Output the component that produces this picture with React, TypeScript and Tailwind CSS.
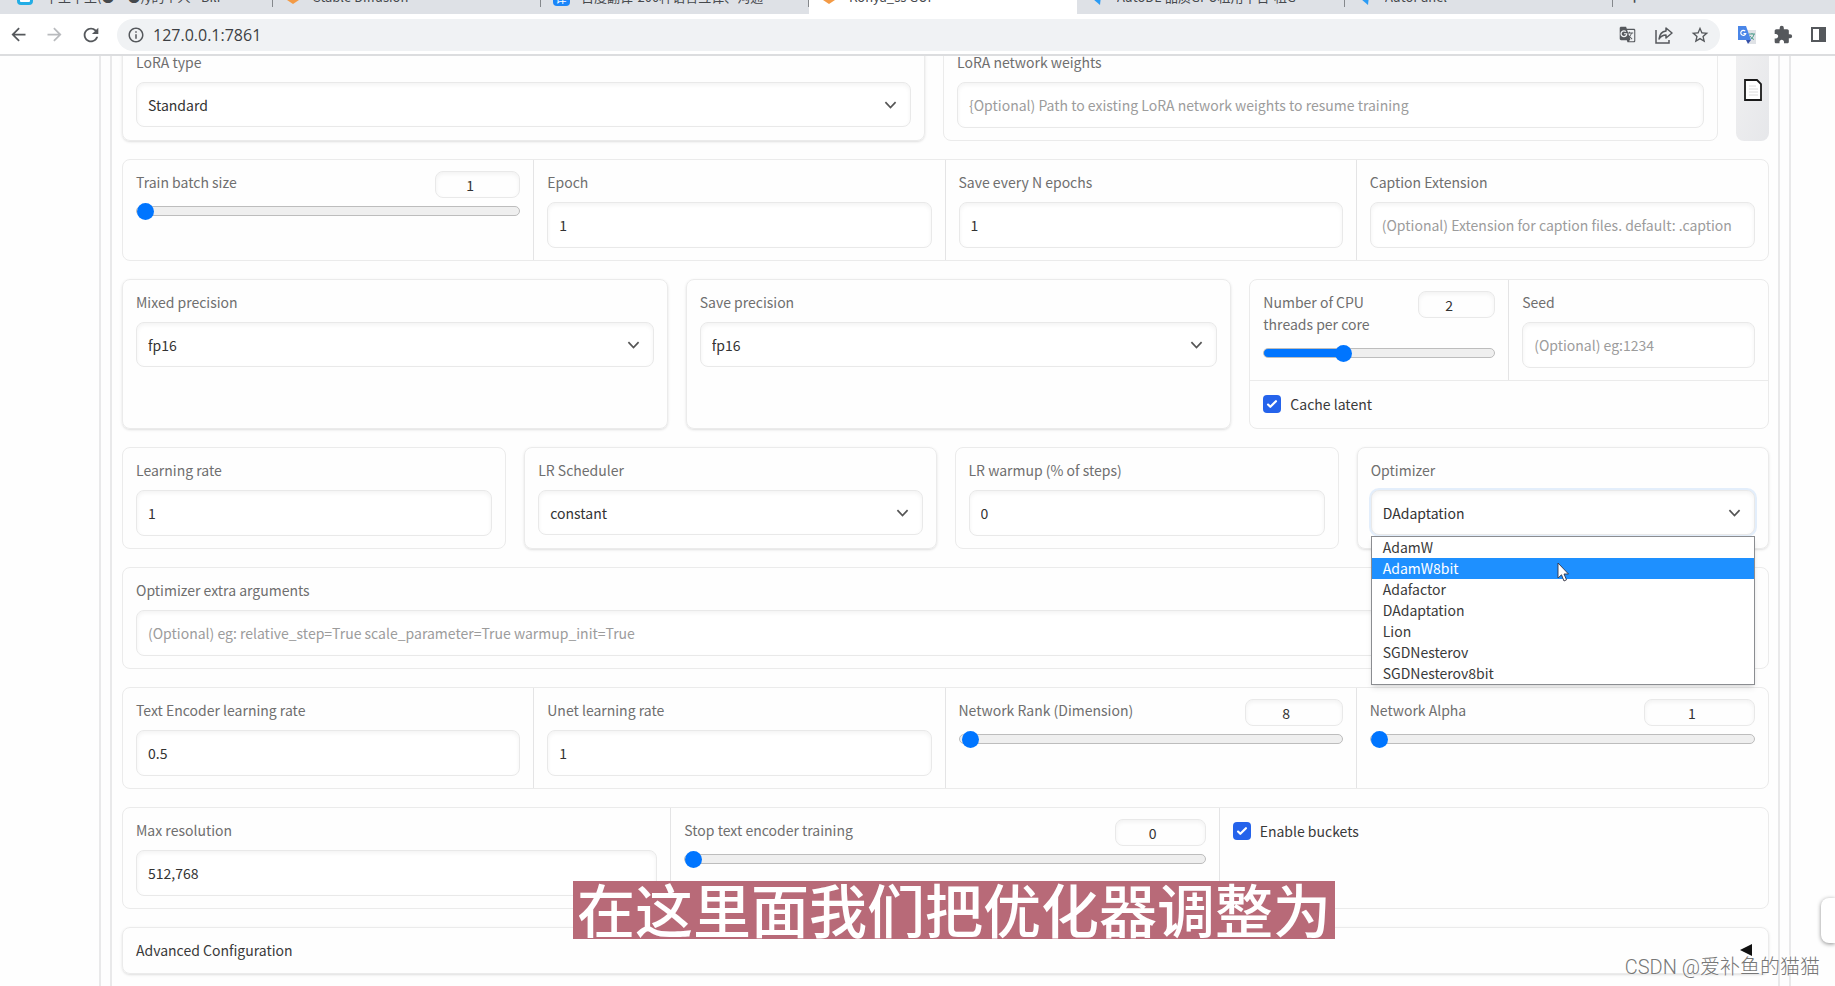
import { useId } from "react";
import type { ReactNode } from "react";
import clsx from "clsx";
import {
  MdArrowBack,
  MdArrowForward,
  MdExtension,
  MdGTranslate,
  MdInfoOutline,
  MdRefresh,
  MdStarBorder,
} from "react-icons/md";

const OPTIMIZERS = ["AdamW", "AdamW8bit", "Adafactor", "DAdaptation", "Lion", "SGDNesterov", "SGDNesterov8bit"];

const labelClass = "mb-[9px] block text-[14px] leading-[22px] text-[#6f6f6f]";
const fieldClass =
  "w-full rounded-lg border border-[#e9e9e9] bg-white px-[11px] text-[14px] text-[#333] shadow-[inset_0_2px_4px_0_rgba(0,0,0,0.05)] outline-none placeholder:text-[#9c9c9c]";
const cardClass = "min-w-0 rounded-lg border border-[#ebebeb]";
const cellClass = "min-w-0 px-[13px] pt-[11px] pb-3";

const TextField = ({ label, value, placeholder }: { label: string; value?: string; placeholder?: string }) => {
  const id = useId();
  return (
    <div className={cellClass}>
      <label htmlFor={id} className={labelClass}>
        {label}
      </label>
      <input id={id} type="text" defaultValue={value} placeholder={placeholder} className={clsx(fieldClass, "h-[46px]")} />
    </div>
  );
};

type SelectFieldProps = { label: string; value: string; options?: string[]; open?: boolean; children?: ReactNode };

const SelectField = ({ label, value, options = [value], open, children }: SelectFieldProps) => {
  const id = useId();
  return (
    <div className={cellClass}>
      <label htmlFor={id} className={labelClass}>
        {label}
      </label>
      <div className="relative mb-px">
        <select
          id={id}
          defaultValue={value}
          className={clsx(
            fieldClass,
            "h-[45px] appearance-none pt-px",
            open && "border-[#a9c8ee] ring-2 ring-[#e3eefb]"
          )}
        >
          {options.map((option) => (
            <option key={option}>{option}</option>
          ))}
        </select>
        <svg
          viewBox="0 0 14 9"
          className="pointer-events-none absolute top-[19px] right-[14px] w-[13px]"
          fill="none"
          stroke="#555"
          strokeWidth="1.8"
        >
          <path d="M1.5 1.2 7 7l5.500-5.800" />
        </svg>
        {children}
      </div>
    </div>
  );
};

type SliderFieldProps = { label: string; value: number; min: number; max: number; width: string };

const SliderField = ({ label, value, min, max, width }: SliderFieldProps) => {
  const id = useId();
  const percent = ((value - min) / (max - min)) * 100;
  const fill = percent > 5 ? percent : 0;
  return (
    <div className={cellClass}>
      <div className="flex items-start justify-between gap-6">
        <label htmlFor={id} className={labelClass}>
          {label}
        </label>
        <input
          type="number"
          aria-label={`${label} value`}
          defaultValue={value}
          className={clsx(
            "h-[27px] shrink-0 rounded-lg border border-[#e9e9e9] text-center text-[14px] text-[#333] shadow-[inset_0_2px_4px_0_rgba(0,0,0,0.05)] outline-none",
            width
          )}
        />
      </div>
      <input
        id={id}
        type="range"
        min={min}
        max={max}
        defaultValue={value}
        style={{ backgroundImage: `linear-gradient(to right, #0075ff ${fill}%, transparent ${fill}%)` }}
        className="my-1 block h-[10px] w-full appearance-none rounded-full border border-[#bdbdbd] bg-[#efefef] [&::-webkit-slider-thumb]:size-[17px] [&::-webkit-slider-thumb]:appearance-none [&::-webkit-slider-thumb]:rounded-full [&::-webkit-slider-thumb]:bg-[#0075ff]"
      />
    </div>
  );
};

const CheckField = ({ label }: { label: string }) => (
  <div className="px-[13px] pt-3 pb-[13px]">
    <label className="flex items-center gap-[9px] text-[14px] leading-[22px] text-[#3a3a3a]">
      <span className="relative flex size-[18px]">
        <input type="checkbox" defaultChecked className="size-[18px] appearance-none rounded bg-[#2563eb]" />
        <svg viewBox="0 0 16 16" fill="white" className="pointer-events-none absolute inset-0 size-[18px]">
          <path d="M12.207 4.793a1 1 0 0 1 0 1.414l-5 5a1 1 0 0 1-1.414 0l-2-2a1 1 0 0 1 1.414-1.414L6.500 9.086l4.293-4.293a1 1 0 0 1 1.414 0z" />
        </svg>
      </span>
      {label}
    </label>
  </div>
);

const Tab = ({ icon, title, active }: { icon: ReactNode; title: string; active?: boolean }) => (
  <div className={clsx("flex w-[268px] min-w-0 items-center gap-3 pr-8 pl-3", active && "rounded-t-lg bg-white")}>
    <span className="flex w-4 shrink-0 justify-center">{icon}</span>
    <span className="flex-1 overflow-hidden text-[13px] whitespace-nowrap text-[#45484c]">{title}</span>
    {!active && <span className="-mr-8 h-5 w-px bg-[#85888c]" />}
  </div>
);

const GradioMark = () => (
  <svg viewBox="0 0 14 14" className="size-[14px]">
    <path d="M7 0 13 4 7 8 1 4z" fill="#f9b97a" />
    <path d="M7 6 13 10 7 14 1 10z" fill="#f39a45" />
  </svg>
);

const AutoMark = () => (
  <svg viewBox="0 0 14 16" className="h-4 w-[14px]">
    <path d="M2 0h9v7l-1 9-7-6z" fill="#2b9bf4" />
  </svg>
);

const BrowserBar = () => (
  <header className="relative z-10 shrink-0 border-b-2 border-[#dcdddf] bg-white">
    <div className="h-[14px] overflow-hidden bg-[#dee1e6]">
      <div className="-mt-5 flex h-[34px]">
        <div className="w-[5px]" />
        <Tab
          icon={<span className="size-[16px] shrink-0 rounded border-3 border-[#23ade5] bg-white" />}
          title="千王千王(●―●)y的个人 - Bili"
        />
        <Tab icon={<GradioMark />} title="Stable Diffusion" />
        <Tab
          icon={<span className="size-[17px] shrink-0 rounded bg-[#1b86f9] text-center text-[11px] leading-[18px] text-white">译</span>}
          title="百度翻译-200种语言互译、沟通"
        />
        <Tab icon={<GradioMark />} title="Kohya_ss GUI" active />
        <Tab icon={<AutoMark />} title="AutoDL-品质GPU租用平台-租G" />
        <Tab icon={<AutoMark />} title="AutoPanel" />
        <button aria-label="New tab" className="ml-4 text-xl text-[#45484c]">
          +
        </button>
      </div>
    </div>
    <div className="flex h-10 items-center px-2 pt-px text-[#55585c]">
      <button aria-label="Back" className="w-[22px]">
        <MdArrowBack size={21} />
      </button>
      <button aria-label="Forward" className="ml-[14px] w-[22px] text-[#b9bbbe]">
        <MdArrowForward size={21} />
      </button>
      <button aria-label="Reload" className="ml-[14px] w-[22px]">
        <MdRefresh size={22} />
      </button>
      <div className="ml-[15px] flex h-8 flex-1 items-center rounded-full bg-[#f0f2f4] px-[10px]">
        <MdInfoOutline size={18} />
        <input
          aria-label="Address"
          defaultValue="127.0.0.1:7861"
          className="ml-2 min-w-0 flex-1 bg-transparent font-['Open_Sans',sans-serif] text-[16px] text-[#3c3f43] outline-none"
        />
        <button aria-label="Translate this page">
          <MdGTranslate size={17} />
        </button>
        <button aria-label="Share" className="ml-[19px]">
          <svg viewBox="0 0 18 18" className="size-[18px]" fill="none" stroke="currentColor" strokeWidth="1.5">
            <path d="M1 4v13h13v-3" />
            <path d="M11 2l6 5-6 5V9C8 9 6 10 4 13c.5-4 3-7.500 7-8z" strokeLinejoin="round" />
          </svg>
        </button>
        <button aria-label="Bookmark" className="ml-[17px]">
          <MdStarBorder size={20} />
        </button>
      </div>
      <button aria-label="Google Translate" className="ml-[17px]">
        <svg viewBox="0 0 20 20" className="size-5">
          <path d="M8 5h11v14h-7z" fill="#dfe2e6" />
          <path d="M1 1h8l5 14H1z" fill="#4a86e8" />
          <path d="M9 15h5l-3 4z" fill="#3450a8" />
          <path d="M12 9h6m-3-1v1m2 0c-.5 3-2 4-3 5m-1-3c1 2 3 3 4 3.500" stroke="#4f9d8c" fill="none" />
          <path d="M8.200 6.200A2.500 2.500 0 1 0 8.700 8.500H6.500" stroke="#fff" strokeWidth="1.200" fill="none" />
        </svg>
      </button>
      <button aria-label="Extensions" className="ml-4">
        <MdExtension size={20} />
      </button>
      <button aria-label="Side panel" className="ml-[17px]">
        <svg viewBox="0 0 17 17" className="size-[17px]" fill="currentColor">
          <path d="M1 1h15v15H1zM3 3v11h6V3z" fillRule="evenodd" />
        </svg>
      </button>
    </div>
  </header>
);

const OptimizerMenu = () => (
  <ul
    role="listbox"
    aria-label="Optimizer options"
    className="absolute top-full right-0 left-0 z-10 mt-px border border-[#8b8d91] bg-white text-[14px] leading-[21px] text-[#3a3a3a] shadow-md"
  >
    {OPTIMIZERS.map((name) => (
      <li
        key={name}
        role="option"
        aria-selected={name === "AdamW8bit"}
        className={clsx("relative px-[11px]", name === "AdamW8bit" && "bg-[#1e90ff] text-white")}
      >
        {name}
        {name === "AdamW8bit" && (
          <svg viewBox="0 0 12 20" className="absolute top-1 left-[185px] z-10 h-5 w-3">
            <path d="M1 1v15l3.500-3.200L7 19l2.500-1.200L7 12h4.500z" fill="#fff" stroke="#334" strokeWidth="0.9" />
          </svg>
        )}
      </li>
    ))}
  </ul>
);

export default function App() {
  return (
    <div className="relative flex h-screen flex-col overflow-hidden bg-[#fefefe] font-['Noto_Sans_CJK_SC',sans-serif]">
      <BrowserBar />
      <main className="mr-[44px] ml-[99px] flex min-h-0 flex-1 border-x-2 border-[#e9e9ea] px-[9px]">
        <div className="min-w-0 flex-1 border-x-2 border-[#e9e9ea] pr-[9px] pl-[10px]">
          <form className="-mt-[17px] flex flex-col gap-[18px]">
            <div className="grid grid-cols-[803fr_775fr_33px] gap-[18px]">
              <div className={clsx(cardClass, "shadow-sm")}>
                <SelectField label="LoRA type" value="Standard" />
              </div>
              <div className={cardClass}>
                <TextField
                  label="LoRA network weights"
                  placeholder="{Optional) Path to existing LoRA network weights to resume training"
                />
              </div>
              <button
                type="button"
                aria-label="Choose file"
                className="flex items-center justify-center rounded-lg bg-gradient-to-br from-[#f0f0f1] to-[#e6e7ea]"
              >
                <svg viewBox="0 0 18 22" className="h-[22px] w-[18px]" fill="#fff" stroke="#1a1a1a" strokeWidth="1.800">
                  <path d="M1 1h12l4 4v16H1z" />
                  <path d="M5 7h7M5 10h9M5 13h9M5 16h9" stroke="#dcdcdc" strokeWidth="1" />
                </svg>
              </button>
            </div>

            <div className={clsx(cardClass, "grid grid-cols-4 divide-x divide-[#e4e4e5]")}>
              <SliderField label="Train batch size" value={1} min={1} max={64} width="w-[85px]" />
              <TextField label="Epoch" value="1" />
              <TextField label="Save every N epochs" value="1" />
              <TextField label="Caption Extension" placeholder="(Optional) Extension for caption files. default: .caption" />
            </div>

            <div className="grid grid-cols-[545fr_545fr_519fr] gap-[18px]">
              <div className={clsx(cardClass, "shadow-sm")}>
                <SelectField label="Mixed precision" value="fp16" />
              </div>
              <div className={clsx(cardClass, "shadow-sm")}>
                <SelectField label="Save precision" value="fp16" />
              </div>
              <div className={clsx(cardClass, "divide-y divide-[#ebebeb]")}>
                <div className="grid grid-cols-2 divide-x divide-[#e4e4e5]">
                  <SliderField label="Number of CPU threads per core" value={2} min={1} max={4} width="w-[77px]" />
                  <TextField label="Seed" placeholder="(Optional) eg:1234" />
                </div>
                <CheckField label="Cache latent" />
              </div>
            </div>

            <div className="grid grid-cols-[384fr_412fr_384fr_412fr] gap-[18px]">
              <div className={cardClass}>
                <TextField label="Learning rate" value="1" />
              </div>
              <div className={clsx(cardClass, "shadow-sm")}>
                <SelectField label="LR Scheduler" value="constant" />
              </div>
              <div className={cardClass}>
                <TextField label="LR warmup (% of steps)" value="0" />
              </div>
              <div className={clsx(cardClass, "shadow-sm")}>
                <SelectField label="Optimizer" value="DAdaptation" options={OPTIMIZERS} open>
                  <OptimizerMenu />
                </SelectField>
              </div>
            </div>

            <div className={cardClass}>
              <TextField
                label="Optimizer extra arguments"
                placeholder="(Optional) eg: relative_step=True scale_parameter=True warmup_init=True"
              />
            </div>

            <div className={clsx(cardClass, "grid grid-cols-4 divide-x divide-[#e4e4e5]")}>
              <TextField label="Text Encoder learning rate" value="0.5" />
              <TextField label="Unet learning rate" value="1" />
              <SliderField label="Network Rank (Dimension)" value={8} min={1} max={1024} width="w-[98px]" />
              <SliderField label="Network Alpha" value={1} min={1} max={1024} width="w-[111px]" />
            </div>

            <div className={clsx(cardClass, "grid grid-cols-3 divide-x divide-[#e4e4e5]")}>
              <TextField label="Max resolution" value="512,768" />
              <SliderField label="Stop text encoder training" value={0} min={0} max={100} width="w-[91px]" />
              <CheckField label="Enable buckets" />
            </div>

            <button
              type="button"
              className={clsx(
                cardClass,
                "flex items-center justify-between px-[13px] pt-[11px] pb-3 text-[14px] leading-[22px] text-[#3a3a3a] shadow-sm"
              )}
            >
              Advanced Configuration
              <svg viewBox="0 0 12 12" className="mr-[3px] size-3" fill="#111">
                <path d="M12 0v12L0 6z" />
              </svg>
            </button>
          </form>
        </div>
      </main>

      <div className="absolute right-0 bottom-[43px] z-10 h-[45px] w-[14px] rounded-l-lg bg-white shadow-[0_1px_4px_rgba(0,0,0,0.45)]" />
      <p className="absolute bottom-[47px] left-[573px] z-20 bg-[#b86a78] px-1 pb-1 text-[58px] leading-[54px] font-medium whitespace-nowrap text-white">
        在这里面我们把优化器调整为
      </p>
      <p className="absolute right-[15px] bottom-[5px] z-20 font-[Roboto,'Noto_Sans_CJK_SC',sans-serif] text-[20px] leading-7 font-light whitespace-nowrap text-[#777] [text-shadow:-1px_-1px_0_#fff]">
        CSDN @爱补鱼的猫猫
      </p>
    </div>
  );
}
